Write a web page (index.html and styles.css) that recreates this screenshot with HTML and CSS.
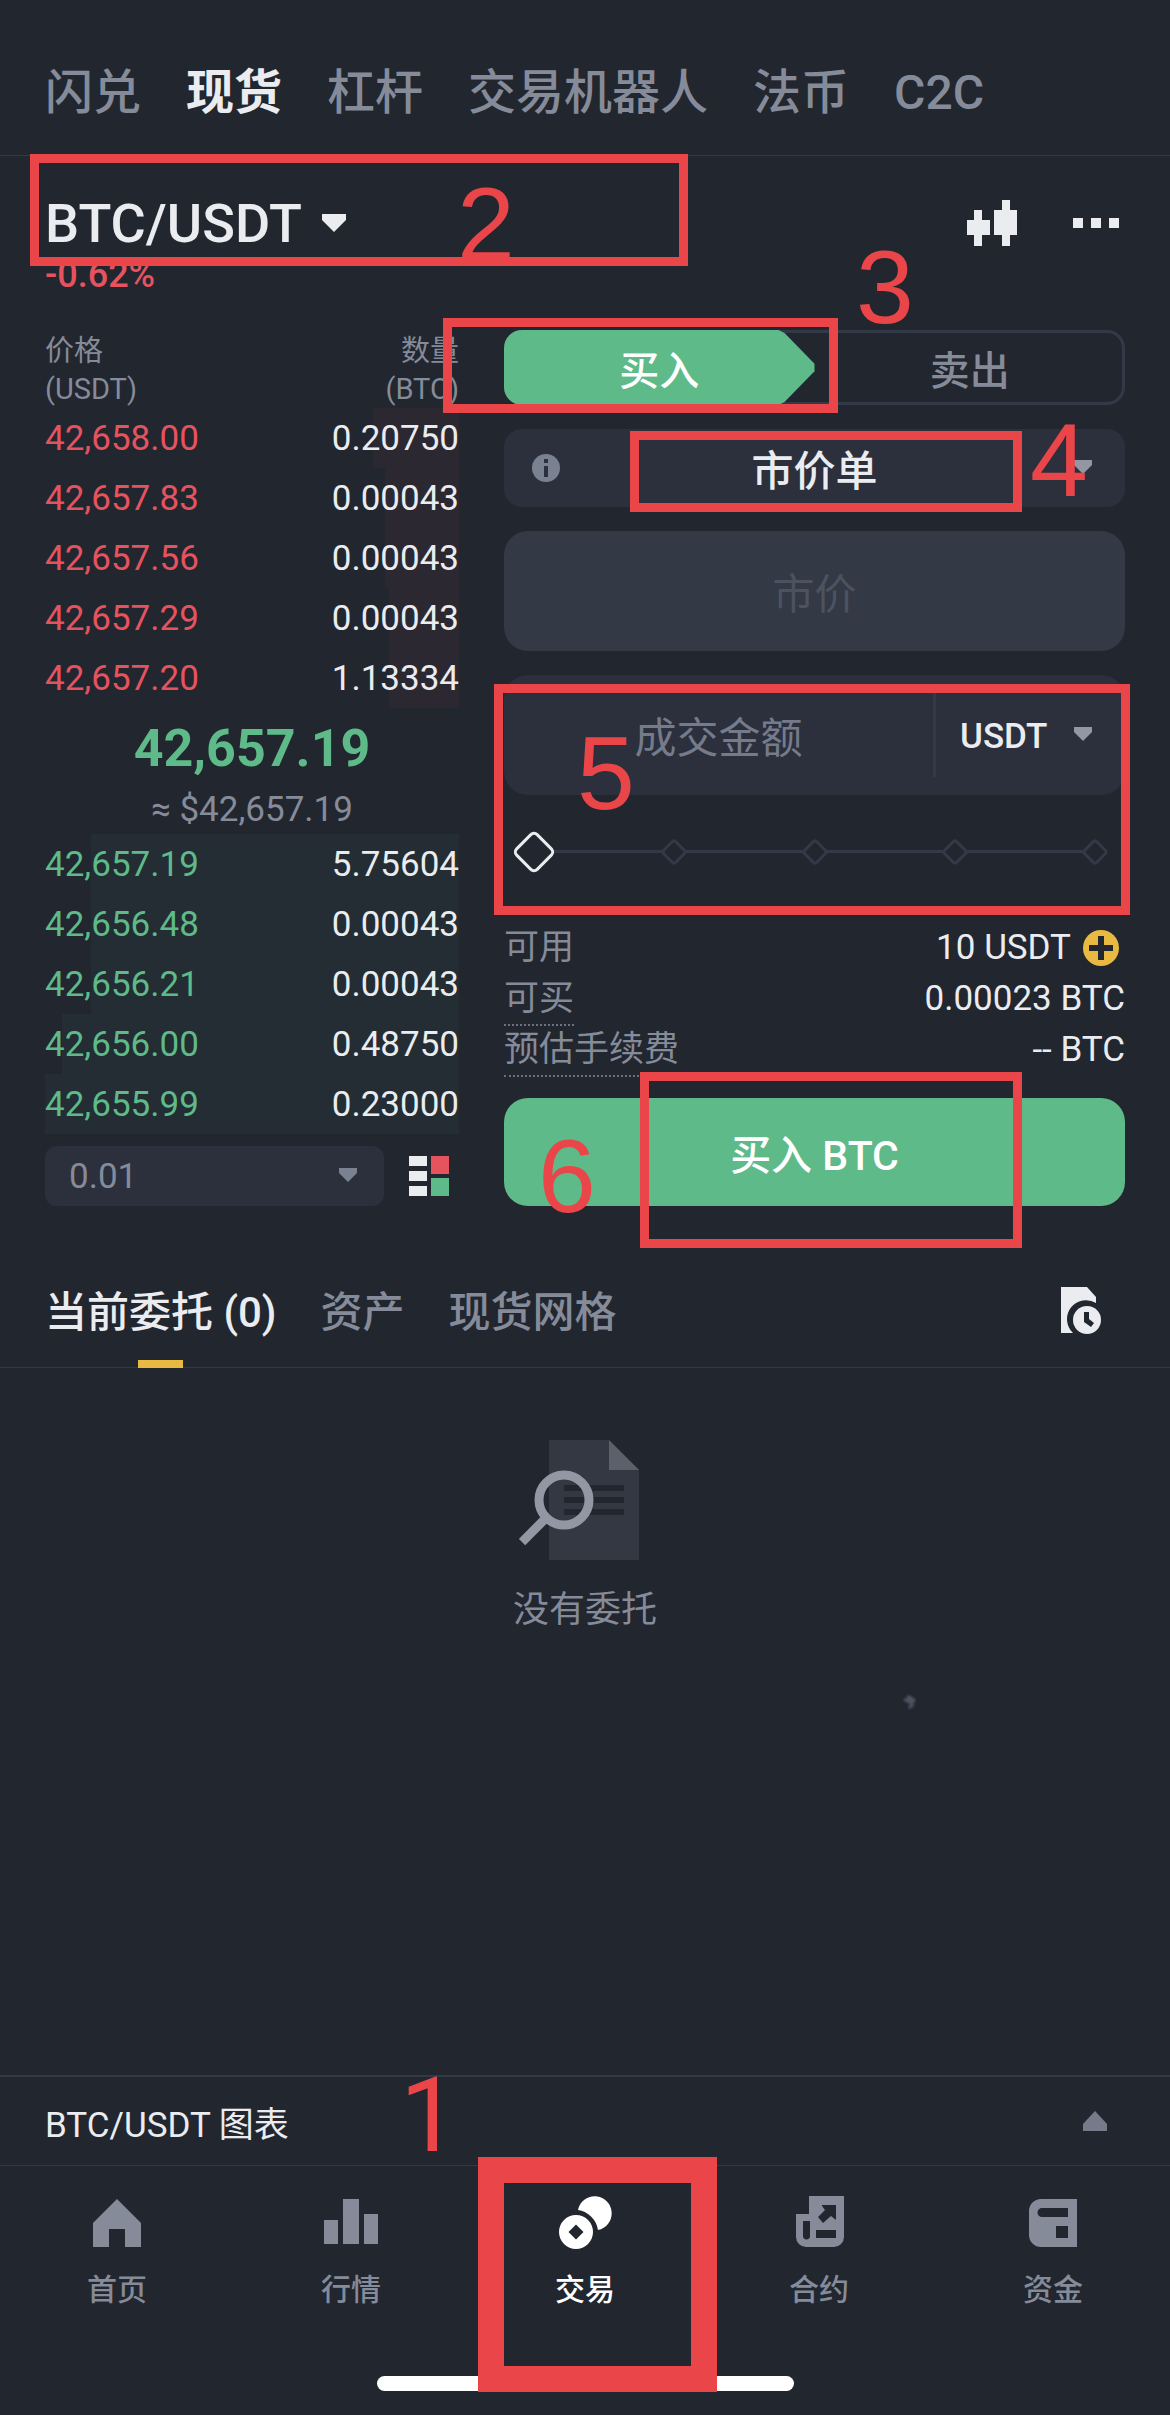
FILE: index.html
```html
<!DOCTYPE html>
<html lang="zh-CN">
<head>
    <meta charset="UTF-8">
    <meta name="viewport" content="width=device-width, initial-scale=1.0">
    <title>BTC/USDT 现货交易</title>
    <link rel="stylesheet" href="styles.css">
</head>
<body>
    <nav class="top-nav">
        <a href="#">闪兑</a>
        <a href="#" class="active">现货</a>
        <a href="#">杠杆</a>
        <a href="#">交易机器人</a>
        <a href="#">法币</a>
        <a href="#">C2C</a>
    </nav>

    <header class="pair-bar">
        <button class="pair" type="button">BTC/USDT
            <svg width="24" height="18" viewBox="0 0 24 18"><path d="M0 0h24v6L12 18 0 6z" fill="currentColor"/></svg>
        </button>
        <button class="icon-btn" type="button" aria-label="K线">
            <svg width="50" height="46" viewBox="0 0 50 46"><path d="M7 10h8v10h8v15h-8v11H7V35H0V20h7zM35 0h8v10h7v25h-7v11h-8V35h-8V10h8z" fill="#eaecef"/></svg>
        </button>
        <button class="icon-btn" type="button" aria-label="更多">
            <svg width="46" height="10" viewBox="0 0 46 10"><path d="M0 0h10v10H0zM18 0h10v10H18zM36 0h10v10H36z" fill="#eaecef"/></svg>
        </button>
        <span class="mark mark-pair"></span>
        <span class="num num-pair">2</span>
    </header>
    <p class="change">-0.62%</p>

    <main class="trade">
        <section class="book">
            <table class="asks">
                <thead>
                    <tr><th>价格<br>(USDT)</th><th>数量<br>(BTC)</th></tr>
                </thead>
                <tbody>
                    <tr style="--depth: 21%"><td>42,658.00</td><td>0.20750</td></tr>
                    <tr style="--depth: 18%"><td>42,657.83</td><td>0.00043</td></tr>
                    <tr style="--depth: 18%"><td>42,657.56</td><td>0.00043</td></tr>
                    <tr style="--depth: 17%"><td>42,657.29</td><td>0.00043</td></tr>
                    <tr style="--depth: 17%"><td>42,657.20</td><td>1.13334</td></tr>
                </tbody>
            </table>
            <div class="last-price">
                <strong>42,657.19</strong>
                <span>≈ $42,657.19</span>
            </div>
            <table class="bids">
                <tbody>
                    <tr style="--depth: 89%"><td>42,657.19</td><td>5.75604</td></tr>
                    <tr style="--depth: 89%"><td>42,656.48</td><td>0.00043</td></tr>
                    <tr style="--depth: 89%"><td>42,656.21</td><td>0.00043</td></tr>
                    <tr style="--depth: 96%"><td>42,656.00</td><td>0.48750</td></tr>
                    <tr style="--depth: 100%"><td>42,655.99</td><td>0.23000</td></tr>
                </tbody>
            </table>
            <div class="book-tools">
                <div class="precision">
                    <select aria-label="价格精度"><option>0.01</option></select>
                    <svg class="caret" width="18" height="14" viewBox="0 0 18 14"><path d="M0 0h18v5l-9 9-9-9z" fill="#7a8190"/></svg>
                </div>
                <button class="icon-btn" type="button" aria-label="盘口显示">
                    <svg width="40" height="40" viewBox="0 0 40 40">
                        <path d="M0 0h18v10H0zM0 15h18v10H0zM0 30h18v10H0z" fill="#eaecef"/>
                        <path d="M22 0h18v18H22z" fill="#e5535f"/>
                        <path d="M22 22h18v18H22z" fill="#5fba89"/>
                    </svg>
                </button>
            </div>
        </section>

        <form class="order">
            <div class="side">
                <button class="buy" type="button">买入</button>
                <button class="sell" type="button">卖出</button>
                <span class="mark mark-side"></span>
                <span class="num num-side">3</span>
            </div>

            <div class="order-type">
                <svg class="info" width="28" height="28" viewBox="0 0 28 28"><circle cx="14" cy="14" r="14" fill="#7a8190"/><path d="M12 5h4v4h-4zM12 12h4v11h-4z" fill="#2b303c"/></svg>
                <select aria-label="订单类型"><option>市价单</option></select>
                <svg class="caret" width="18" height="14" viewBox="0 0 18 14"><path d="M0 0h18v5l-9 9-9-9z" fill="#9197a3"/></svg>
                <span class="mark mark-type"></span>
                <span class="num num-type">4</span>
            </div>

            <input class="price" type="text" placeholder="市价" aria-label="价格" disabled>

            <div class="amount">
                <input type="text" placeholder="成交金额" aria-label="成交金额">
                <div class="unit">
                    <select aria-label="计价单位"><option>USDT</option></select>
                    <svg class="caret" width="18" height="14" viewBox="0 0 18 14"><path d="M0 0h18v5l-9 9-9-9z" fill="#9197a3"/></svg>
                </div>
                <span class="mark mark-amount"></span>
                <span class="num num-amount">5</span>
            </div>

            <div class="slider">
                <div class="ticks"><i></i><i></i><i></i><i></i><i></i></div>
                <input type="range" min="0" max="100" value="0" aria-label="仓位比例">
            </div>

            <dl class="summary">
                <div><dt>可用</dt><dd>10 USDT
                    <svg width="36" height="36" viewBox="0 0 36 36"><circle cx="18" cy="18" r="18" fill="#e8ba42"/><path d="M15 6h6v9h9v6h-9v9h-6v-9H6v-6h9z" fill="#22262f"/></svg></dd></div>
                <div><dt class="hint">可买</dt><dd>0.00023 BTC</dd></div>
                <div><dt class="hint">预估手续费</dt><dd>-- BTC</dd></div>
            </dl>

            <div class="submit">
                <button type="button">买入 BTC</button>
                <span class="mark mark-submit"></span>
                <span class="num num-submit">6</span>
            </div>
        </form>
    </main>

    <nav class="tabs">
        <a href="#" class="active">当前委托 (0)</a>
        <a href="#">资产</a>
        <a href="#">现货网格</a>
        <button class="icon-btn" type="button" aria-label="历史委托">
            <svg width="42" height="48" viewBox="0 0 42 48">
                <path d="M0 0h26l9 10v6A19 19 0 0 0 12 46H0z" fill="#eaecef"/>
                <circle cx="26" cy="33" r="14" fill="#eaecef"/>
                <path d="M23 25h5v7l5 4-3 4-7-5z" fill="#22262f"/>
            </svg>
        </button>
    </nav>

    <section class="empty">
        <svg width="132" height="120" viewBox="0 0 132 120">
            <path d="M30 0h60l30 30v90H30z" fill="#333842"/>
            <path d="M90 0l30 30H90z" fill="#5b616b"/>
            <path d="M45 45h60v6H45zM45 57h60v6H45zM45 69h60v6H45z" fill="#22262f"/>
            <circle cx="45" cy="60" r="25" fill="none" stroke="#9297a3" stroke-width="9"/>
            <path d="M27 78L3 102" stroke="#9297a3" stroke-width="9"/>
        </svg>
        <p>没有委托</p>
        <svg class="speck" width="20" height="20" viewBox="0 0 20 20"><path d="M7 3l4 1 5 4-2 3-2 1 3 1-5 4-2-1 2-4-6-3-1-2 4-1z" fill="#4c545f"/></svg>
    </section>

    <a class="chart-bar" href="#">
        <span>BTC/USDT 图表</span>
        <svg width="24" height="20" viewBox="0 0 24 20"><path d="M12 0l12 13v7H0v-7z" fill="#757b8a"/></svg>
    </a>

    <footer class="bottom">
        <nav class="bottom-nav">
            <a href="#">
                <svg width="54" height="54" viewBox="0 0 54 54"><path d="M27 3l24 24v24H35V33H19v18H3V27z" fill="currentColor"/></svg>
                首页
            </a>
            <a href="#">
                <svg width="54" height="54" viewBox="0 0 54 54"><path d="M0 24h14v24H0zM19 3h16v45H19zM40 18h14v30H40z" fill="currentColor"/></svg>
                行情
            </a>
            <a href="#" class="active">
                <svg width="54" height="54" viewBox="0 0 54 54">
                    <path d="M20 14a17 17 0 1 1 20 20A24 24 0 0 0 20 14z" fill="currentColor"/>
                    <path fill-rule="evenodd" d="M18 19a17 17 0 1 1 0 34 17 17 0 0 1 0-34zM18 28.500l-7.500 7.500 7.500 7.500 7.500-7.500z" fill="currentColor"/>
                </svg>
                交易
                <span class="mark mark-nav"></span>
                <span class="num num-nav">1</span>
            </a>
            <a href="#">
                <svg width="54" height="54" viewBox="0 0 54 54">
                    <path fill-rule="evenodd" d="M17 0h35v41a10 10 0 0 1-10 10H14A10 10 0 0 1 4 41V18h13zM11 25v15a3 3 0 0 0 7 0V25zM24 34v8h20v-8zM30 9v1l3 4-7 7 5 6 8-7 5 4V9z" fill="currentColor"/>
                </svg>
                合约
            </a>
            <a href="#">
                <svg width="54" height="54" viewBox="0 0 54 54">
                    <path fill-rule="evenodd" d="M15 3h36v48H15A12 12 0 0 1 3 39V15A12 12 0 0 1 15 3zM16 12a4 4 0 0 0 0 9h26v-9zM30 30v12h12V30z" fill="currentColor"/>
                </svg>
                资金
            </a>
        </nav>
        <div class="home-bar"></div>
    </footer>
</body>
</html>
```

FILE: styles.css
```css
*{
    box-sizing: border-box;
    margin: 0;
    padding: 0;
}
body{
    display: flex;
    flex-direction: column;
    min-height: 100vh;
    background: #22262f;
    color: #eaecef;
    font-family: Roboto, "Noto Sans CJK SC", sans-serif;
    font-size: 35px;
}
a{
    color: inherit;
    text-decoration: none;
}
svg{
    display: block;
    flex: none;
}
button, input, select{
    border: 0;
    background: none;
    color: inherit;
    font: inherit;
    outline: 0;
    appearance: none;
}
input, select{
    min-width: 0;
}

/* 顶部导航 */
.top-nav{
    display: flex;
    gap: 45px;
    padding: 58px 45px 27px;
    border-bottom: 1px solid #333946;
    color: #858b99;
    font-size: 48px;
    font-weight: 500;
    line-height: 70px;
    white-space: nowrap;
}
.top-nav .active{
    color: #eaecef;
    font-weight: 700;
}

/* 交易对 */
.pair-bar{
    position: relative;
    z-index: 2;
    display: flex;
    align-items: center;
    gap: 56px;
    height: 110px;
    padding: 24px 51px 0 45px;
    background: #22262f;
}
.pair{
    display: flex;
    align-items: center;
    gap: 20px;
    margin-right: auto;
    font-size: 54px;
    font-weight: 500;
}
.change{
    margin-top: -12px;
    padding: 0 45px;
    color: #e5535f;
    font-size: 36px;
    font-weight: 500;
    line-height: 42px;
}

/* 主区域 */
.trade{
    display: grid;
    grid-template-columns: minmax(0, 2fr) minmax(0, 3fr);
    gap: 45px;
    padding: 34px 45px 0;
}
table{
    width: 100%;
    border-collapse: collapse;
}
th{
    height: 78px;
    padding-top: 2px;
    color: #858b99;
    font-size: 29px;
    font-weight: 400;
    line-height: 38px;
    text-align: left;
}
td{
    height: 60px;
    padding-top: 2px;
    line-height: 58px;
}
th:last-child, td:last-child{
    text-align: right;
}
.asks tbody tr{
    background: linear-gradient(to left, #2c2832 var(--depth), transparent 0);
}
.bids tr{
    background: linear-gradient(to left, #232d33 var(--depth), transparent 0);
}
.asks td:first-child{
    color: #e5535f;
}
.bids td:first-child{
    color: #5fba89;
}
.last-price{
    display: flex;
    flex-direction: column;
    height: 126px;
    padding-top: 2px;
    text-align: center;
}
.last-price strong{
    color: #5fba89;
    font-size: 52px;
    line-height: 78px;
}
.last-price span{
    color: #858b99;
    line-height: 44px;
}
.book-tools{
    display: flex;
    align-items: center;
    gap: 25px;
    margin-top: 12px;
    padding-right: 10px;
}
.precision{
    position: relative;
    flex: 1;
    height: 60px;
    border-radius: 12px;
    background: #2b303c;
    color: #858b99;
}
.precision select{
    width: 100%;
    height: 100%;
    padding-left: 24px;
}
.caret{
    position: absolute;
    top: calc(50% - 8px);
    right: 33px;
    pointer-events: none;
}
.precision .caret{
    right: 27px;
}

/* 下单表单 */
.side{
    position: relative;
    display: flex;
    height: 75px;
    border-radius: 18px;
    box-shadow: inset 0 0 0 3px #333946;
    font-size: 40px;
    font-weight: 500;
}
.side button{
    flex: 1;
}
.buy{
    border-radius: 18px 0 0 18px;
    background: #5fba89;
    color: #fff;
    clip-path: polygon(0 0, calc(100% - 36px) 0, calc(100% - 30px) 3px, 100% 45%, 100% 55%, calc(100% - 30px) calc(100% - 3px), calc(100% - 36px) 100%, 0 100%);
}
.sell{
    color: #858b99;
}
.order-type{
    position: relative;
    height: 78px;
    margin-top: 24px;
    border-radius: 18px;
    background: #2b303c;
    font-size: 42px;
    font-weight: 500;
}
.order-type select{
    width: 100%;
    height: 100%;
    padding-top: 6px;
    text-align-last: center;
}
.info{
    position: absolute;
    top: 25px;
    left: 28px;
}
.price{
    display: block;
    width: 100%;
    height: 120px;
    margin-top: 24px;
    padding-top: 6px;
    border-radius: 24px;
    background: #333945;
    font-size: 42px;
    text-align: center;
}
.price::placeholder{
    color: #4c5260;
}
.amount{
    position: relative;
    display: flex;
    align-items: center;
    height: 120px;
    margin-top: 24px;
    border-radius: 24px;
    background: #2b303c;
}
.amount input{
    flex: 1;
    height: 100%;
    padding-top: 6px;
    font-size: 42px;
    text-align: center;
}
.amount input::placeholder{
    color: #757b8a;
}
.unit{
    position: relative;
    width: 192px;
    height: 84px;
    border-left: 3px solid #333946;
    font-weight: 500;
}
.unit select{
    width: 100%;
    height: 100%;
    padding: 3px 0 0 24px;
}
.slider{
    position: relative;
    height: 114px;
}
.slider::before{
    content: "";
    position: absolute;
    top: 55px;
    left: 30px;
    right: 30px;
    height: 3px;
    background: #333946;
}
.ticks{
    position: relative;
    display: flex;
    align-items: center;
    justify-content: space-between;
    height: 100%;
    padding: 0 20px;
}
.ticks i{
    width: 20px;
    height: 20px;
    border: 3px solid #333946;
    border-radius: 4px;
    background: #22262f;
    transform: rotate(45deg);
}
.slider input{
    position: absolute;
    top: 0;
    left: 14px;
    width: calc(100% - 28px);
    height: 100%;
}
.slider input::-webkit-slider-thumb{
    width: 32px;
    height: 32px;
    border: 3px solid #eaecef;
    border-radius: 6px;
    background: #22262f;
    transform: rotate(45deg);
    appearance: none;
}
.summary{
    margin-top: 13px;
    line-height: 51px;
}
.summary div{
    display: flex;
    justify-content: space-between;
    height: 51px;
}
.summary dt{
    color: #858b99;
}
.summary .hint{
    height: 53px;
    border-bottom: 2px dotted #6b7180;
}
.summary dd{
    display: flex;
    align-items: center;
    gap: 12px;
}
.summary dd svg{
    margin-right: 6px;
}
.submit{
    position: relative;
    margin-top: 23px;
}
.submit button{
    width: 100%;
    height: 108px;
    border-radius: 24px;
    background: #5fba89;
    color: #fff;
    font-size: 41px;
    font-weight: 500;
}

/* 委托列表 */
.tabs{
    display: flex;
    align-items: center;
    gap: 44px;
    height: 162px;
    padding: 0 67px 0 45px;
    border-bottom: 1px solid #333946;
    color: #858b99;
    font-size: 42px;
    font-weight: 500;
    white-space: nowrap;
}
.tabs a{
    position: relative;
    padding-top: 52px;
    line-height: 110px;
}
.tabs .active{
    color: #eaecef;
}
.tabs .active::after{
    content: "";
    position: absolute;
    bottom: 0;
    left: calc(50% - 23px);
    width: 45px;
    height: 8px;
    background: #e8ba42;
}
.tabs button{
    margin-left: auto;
    padding-top: 48px;
}
.empty{
    position: relative;
    display: flex;
    flex: 1;
    flex-direction: column;
    align-items: center;
    padding-top: 72px;
    color: #858b99;
}
.empty p{
    margin-top: 24px;
    font-size: 36px;
    line-height: 52px;
}
.speck{
    position: absolute;
    top: 324px;
    right: 250px;
    filter: blur(1px);
}
.chart-bar{
    display: flex;
    align-items: center;
    justify-content: space-between;
    height: 90px;
    padding: 0 63px 0 45px;
    border-top: 2px solid #333946;
}

/* 底部导航 */
.bottom{
    padding-bottom: 24px;
    border-top: 1px solid #333946;
}
.bottom-nav{
    display: grid;
    grid-template-columns: repeat(5, 1fr);
    color: #858b99;
    font-size: 30px;
    font-weight: 500;
    line-height: 36px;
}
.bottom-nav a{
    position: relative;
    display: flex;
    flex-direction: column;
    align-items: center;
    gap: 22px;
    padding: 30px 0 68px;
}
.bottom-nav .active{
    color: #fff;
}
.home-bar{
    width: 417px;
    height: 15px;
    margin: 0 auto;
    border-radius: 8px;
    background: #fff;
}

/* 步骤标注 */
.mark, .num{
    position: absolute;
    z-index: 3;
    pointer-events: none;
}
.mark{
    border: 9px solid #ea464a;
}
.num{
    color: #ea464a;
    font: 104px/104px "Liberation Sans", sans-serif;
}
.mark-pair{
    top: -2px;
    left: 30px;
    width: 658px;
    height: 112px;
}
.num-pair{
    top: 16px;
    left: 457px;
}
.mark-side{
    top: -12px;
    left: -61px;
    width: 395px;
    height: 95px;
}
.num-side{
    top: -95px;
    left: 352px;
}
.mark-type{
    top: 2px;
    left: 126px;
    width: 392px;
    height: 81px;
}
.num-type{
    top: -21px;
    left: 526px;
}
.mark-amount{
    top: 9px;
    left: -10px;
    width: 636px;
    height: 231px;
}
.num-amount{
    top: 46px;
    left: 73px;
}
.mark-submit{
    top: -26px;
    left: 136px;
    width: 382px;
    height: 176px;
}
.num-submit{
    top: 26px;
    left: 34px;
}
.bottom-nav .mark-nav{
    top: -9px;
    left: 10px;
    width: 239px;
    height: 235px;
    border-width: 26px;
}
/* Roboto 的 1 没有底部横线 */
.num-nav{
    top: -102px;
    left: -68px;
    font-family: Roboto, sans-serif;
}
```
